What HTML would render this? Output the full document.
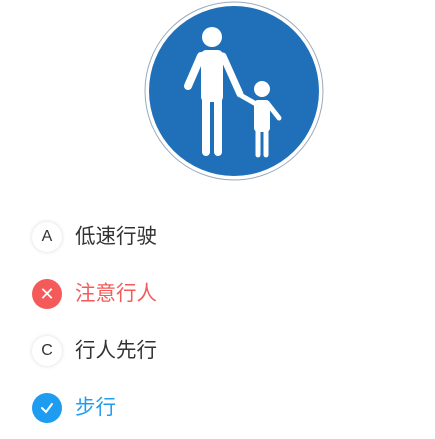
<!DOCTYPE html>
<html><head><meta charset="utf-8"><style>
body{margin:0;width:435px;height:439px;background:#fff;font-family:"Liberation Sans","Noto Sans CJK SC",sans-serif;position:relative;overflow:hidden}
.o{position:absolute;left:32px;width:30px;height:30px;border-radius:50%;display:flex;align-items:center;justify-content:center;font-size:16px;color:#333;box-shadow:0 0 4px rgba(0,0,0,.15);background:#fff}
.t{position:absolute;left:75px;font-size:20.5px;color:#333;line-height:30px}
</style></head><body>
<svg style="position:absolute;left:0;top:0" width="435" height="190">
<circle cx="234" cy="91" r="89" fill="#fff" stroke="#9ab" stroke-width="1"/>
<circle cx="234" cy="91" r="85" fill="#1f70b8"/>
<g fill="#fff" stroke="#fff" stroke-linecap="round" stroke-linejoin="round">
<circle cx="212" cy="37" r="10" stroke="none"/>
<rect x="201" y="50" width="22" height="52" rx="5" stroke="none"/>
<path d="M201 56 L188 86" stroke-width="8" fill="none"/>
<path d="M223 56 L240 94" stroke-width="7" fill="none"/>
<path d="M206 100 L206 152 M218 100 L218 152" stroke-width="8" fill="none"/>
<circle cx="262" cy="89" r="8" stroke="none"/>
<rect x="254" y="100" width="16" height="32" rx="4" stroke="none"/>
<path d="M256 104 L242 96" stroke-width="5" fill="none"/>
<path d="M268 104 L279 118" stroke-width="5" fill="none"/>
<path d="M258 130 L258 155 M266 130 L266 155" stroke-width="5" fill="none"/>
</g>
</svg>
<div class="o" style="top:222px">A</div><div class="t" style="top:222px">低速行驶</div>
<div class="o" style="top:279px;background:#f55a5a;box-shadow:none;color:#fff;font-size:18px">✕</div><div class="t" style="top:279px;color:#f55a5a">注意行人</div>
<div class="o" style="top:336px">C</div><div class="t" style="top:336px">行人先行</div>
<div class="o" style="top:393px;background:#1e9cf0;box-shadow:none"><svg width="16" height="16"><path d="M3 8 L7 12 L13 4" stroke="#fff" stroke-width="2" fill="none" stroke-linecap="round"/></svg></div><div class="t" style="top:393px;color:#1e9cf0">步行</div>
</body></html>
